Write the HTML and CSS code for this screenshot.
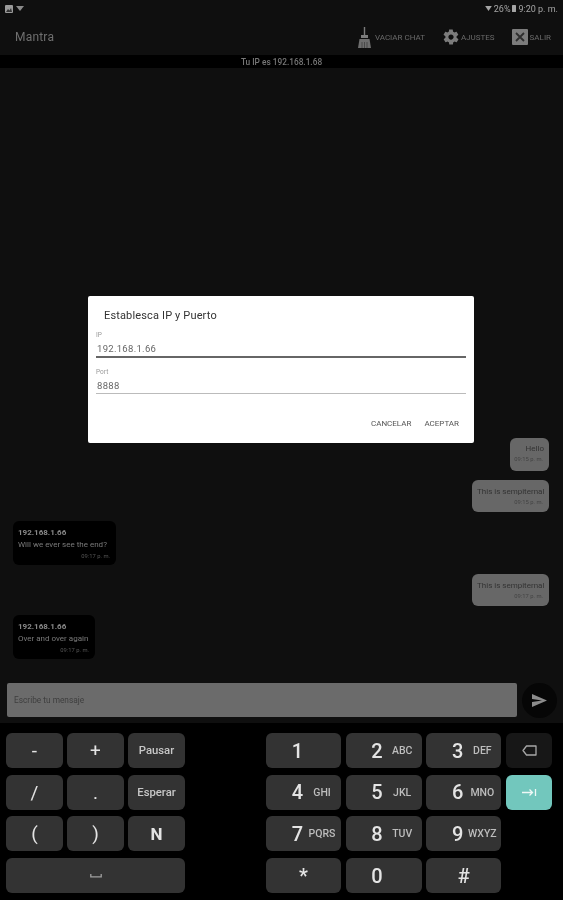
FILE: index.html
```html
<!DOCTYPE html>
<html lang="en">
<head>
  <meta charset="UTF-8">
  <meta name="viewport" content="width=device-width, initial-scale=1.0">
  <title>Mantra</title>
  <link rel="stylesheet" href="styles.css">
</head>
<body>
  <div class="app">
    <div class="status-bar">
      <div class="status-left">
        <svg width="8" height="8" viewBox="0 0 8 8"><rect width="8" height="8" rx="1" fill="#9a9a9a"/><path d="M1 7l2-3 1.500 1.500L6 3l1 4z" fill="#333"/></svg>
        <svg width="8" height="5" viewBox="0 0 8 5"><path d="M0 0h8L4 5z" fill="#8a8a8a"/></svg>
      </div>
      <div class="status-right">
        <svg width="7" height="5" viewBox="0 0 8 6"><path d="M0 0h8L4 6z" fill="#a5a5a5"/></svg>
        <span>26%</span>
        <svg width="4" height="7" viewBox="0 0 4 7"><rect width="4" height="7" rx="0.500" fill="#a5a5a5"/></svg>
        <span>9:20 p. m.</span>
      </div>
    </div>

    <header class="app-bar">
      <div class="app-title">Mantra</div>
      <div class="actions">
        <div class="action action-clear">
          <svg width="15" height="21" viewBox="0 0 15 21"><path d="M6.800 0h1.400v8H6.800z" fill="#7c7c7c"/><path d="M4 8h7v3H4z" fill="#7c7c7c"/><path d="M2.500 12h10l1.500 9H1z" fill="#6e6e6e"/><path d="M5 15v6M7.500 15v6M10 15v6" stroke="#3a3a3a" stroke-width="0.700"/></svg>
          <span>VACIAR CHAT</span>
        </div>
        <div class="action action-settings">
          <svg width="18" height="18" viewBox="0 0 24 24"><path fill="#7c7c7c" d="M19.400 13c.1-.3.1-.7.1-1s0-.7-.1-1l2.100-1.600c.2-.2.2-.4.100-.6l-2-3.500c-.1-.2-.4-.3-.6-.2l-2.500 1c-.5-.4-1.100-.7-1.700-1l-.4-2.600c0-.3-.2-.4-.5-.4h-4c-.3 0-.5.100-.5.400l-.4 2.600c-.6.300-1.200.6-1.700 1l-2.500-1c-.2-.1-.5 0-.6.200l-2 3.500c-.1.200-.1.400.1.600L4.600 11c-.1.300-.1.700-.1 1s0 .7.100 1l-2.100 1.600c-.2.200-.2.400-.1.600l2 3.500c.1.200.4.300.6.200l2.500-1c.5.400 1.100.7 1.700 1l.4 2.600c0 .3.200.4.500.4h4c.3 0 .5-.1.500-.4l.4-2.600c.6-.3 1.200-.6 1.700-1l2.500 1c.2.100.5 0 .6-.2l2-3.500c.1-.2.100-.4-.1-.6zM12 15.500c-1.900 0-3.500-1.600-3.500-3.500s1.600-3.500 3.500-3.500 3.500 1.600 3.500 3.500-1.600 3.500-3.500 3.500z"/></svg>
          <span>AJUSTES</span>
        </div>
        <div class="action action-exit">
          <svg width="16" height="16" viewBox="0 0 16 16"><rect width="16" height="16" rx="1" fill="#7c7c7c"/><path d="M4 4l8 8M12 4l-8 8" stroke="#2e2e2e" stroke-width="1.800"/></svg>
          <span>SALIR</span>
        </div>
      </div>
    </header>

    <div class="ip-bar">Tu IP es 192.168.1.68</div>

    <main class="chat">
      <div class="bubble bubble-me bubble-short">
        <div class="bubble-text">Hello</div>
        <div class="bubble-time">09:15 p. m.</div>
      </div>
      <div class="bubble bubble-me">
        <div class="bubble-text">This is sempiternal</div>
        <div class="bubble-time">09:15 p. m.</div>
      </div>
      <div class="bubble bubble-them bubble-wide">
        <div class="bubble-from">192.168.1.66</div>
        <div class="bubble-text">Will we ever see the end?</div>
        <div class="bubble-time">09:17 p. m.</div>
      </div>
      <div class="bubble bubble-me">
        <div class="bubble-text">This is sempiternal</div>
        <div class="bubble-time">09:17 p. m.</div>
      </div>
      <div class="bubble bubble-them bubble-narrow">
        <div class="bubble-from">192.168.1.66</div>
        <div class="bubble-text">Over and over again</div>
        <div class="bubble-time">09:17 p. m.</div>
      </div>
    </main>

    <div class="composer">
      <div class="composer-input">Escribe tu mensaje</div>
      <div class="send-btn">
        <svg width="15" height="13" viewBox="0 0 15 13"><path d="M0 0l15 6.500L0 13V8l10-1.500L0 5z" fill="#8c8c8c"/></svg>
      </div>
    </div>

    <div class="keyboard">
      <div class="keys-left">
        <div class="key key-symbol">-</div>
        <div class="key key-symbol">+</div>
        <div class="key key-word">Pausar</div>
        <div class="key key-symbol">/</div>
        <div class="key key-symbol">.</div>
        <div class="key key-word">Esperar</div>
        <div class="key key-symbol">(</div>
        <div class="key key-symbol">)</div>
        <div class="key key-symbol key-bold">N</div>
        <div class="key key-space">
          <svg width="12" height="4" viewBox="0 0 12 4"><path d="M.8 0v2.800h10.400V0" fill="none" stroke="#a0a0a0" stroke-width="1.300"/></svg>
        </div>
      </div>
      <div class="keys-right">
        <div class="key key-digit"><b>1</b><span></span></div>
        <div class="key key-digit"><b>2</b><span>ABC</span></div>
        <div class="key key-digit"><b>3</b><span>DEF</span></div>
        <div class="key key-back">
          <svg width="15" height="11" viewBox="0 0 15 11"><path d="M4.500 1H14v9H4.500L1 5.500z" fill="none" stroke="#a8a8a8" stroke-width="1.300" stroke-linejoin="round"/></svg>
        </div>
        <div class="key key-digit"><b>4</b><span>GHI</span></div>
        <div class="key key-digit"><b>5</b><span>JKL</span></div>
        <div class="key key-digit"><b>6</b><span>MNO</span></div>
        <div class="key key-tab">
          <svg width="15" height="9" viewBox="0 0 15 9"><path d="M0 4.500h10M7.500 1.500l3 3-3 3M13.500 1v7" fill="none" stroke="#eef8f6" stroke-width="1.300"/></svg>
        </div>
        <div class="key key-digit"><b>7</b><span>PQRS</span></div>
        <div class="key key-digit"><b>8</b><span>TUV</span></div>
        <div class="key key-digit"><b>9</b><span>WXYZ</span></div>
        <div class="key-empty"></div>
        <div class="key key-digit key-center"><b>*</b></div>
        <div class="key key-digit"><b>0</b><span></span></div>
        <div class="key key-digit key-center"><b>#</b></div>
        <div class="key-empty"></div>
      </div>
    </div>

    <div class="dialog">
      <div class="dialog-title">Establesca IP y Puerto</div>
      <div class="field field-active">
        <label>IP</label>
        <div class="field-value">192.168.1.66</div>
      </div>
      <div class="field">
        <label>Port</label>
        <div class="field-value">8888</div>
      </div>
      <div class="dialog-buttons">
        <span>CANCELAR</span>
        <span>ACEPTAR</span>
      </div>
    </div>
  </div>
</body>
</html>
```

FILE: styles.css
```css
body {
  margin: 0;
  padding: 0;
  background-color: #0f0f0f;
  font-family: Roboto, 'Liberation Sans', sans-serif;
}

/* reference is a soft, upscaled capture */
.app {
  position: relative;
  width: 563px;
  height: 900px;
  display: flex;
  flex-direction: column;
  overflow: hidden;
  background-color: #0f0f0f;
  filter: blur(0.4px);
}

.status-bar {
  height: 17px;
  padding: 0 5px;
  display: flex;
  justify-content: space-between;
  align-items: center;
  color: #a5a5a5;
  font-size: 9px;
}

.status-left,
.status-right {
  display: flex;
  align-items: center;
  gap: 3px;
}

.status-right {
  gap: 2px;
}

.app-bar {
  height: 38px;
  box-sizing: border-box;
  padding: 2px 12px 0 15px;
  display: flex;
  justify-content: space-between;
  align-items: center;
}

.app-title {
  color: #6f6f6f;
  font-size: 12px;
  letter-spacing: 0.2px;
}

.actions {
  display: flex;
  align-items: center;
}

.action {
  display: flex;
  align-items: center;
  gap: 2px;
  color: #6a6a6a;
  font-size: 8px;
}

.action-clear {
  gap: 3px;
  margin-right: 17px;
}

.action-settings {
  gap: 1px;
  margin-right: 17px;
}

.ip-bar {
  height: 13px;
  line-height: 14px;
  background-color: #000;
  color: #777;
  font-size: 8.300px;
  font-weight: 500;
  text-align: center;
}

.chat {
  flex: 1;
  padding: 0 14px 24px 13px;
  display: flex;
  flex-direction: column;
  justify-content: flex-end;
  gap: 9px;
}

.bubble {
  box-sizing: border-box;
  height: 32px;
  width: 77px;
  padding: 7px 6px 0 5px;
  border-radius: 6px;
  font-size: 8px;
}

.bubble-me {
  align-self: flex-end;
  background-color: #676767;
  color: #333;
  text-align: right;
}

.bubble-short {
  width: 39px;
  height: 33px;
  padding: 6px 6px 0 2px;
}

.bubble-them {
  align-self: flex-start;
  height: 44px;
  background-color: #000;
  color: #7a7a7a;
}

.bubble-wide {
  width: 103px;
}

.bubble-narrow {
  width: 82px;
}

.bubble-text {
  line-height: 10px;
  white-space: nowrap;
}

.bubble-me .bubble-text {
  margin-right: -1px;
}

.bubble-time {
  margin-top: 2px;
  font-size: 5.800px;
  line-height: 7px;
  text-align: right;
  white-space: nowrap;
  opacity: 0.7;
}

.bubble-them .bubble-time {
  margin-top: 3px;
}

.bubble-from {
  margin-bottom: 3px;
  font-size: 8px;
  font-weight: 700;
  line-height: 9px;
  color: #8a8a8a;
}

.composer {
  height: 40px;
  box-sizing: border-box;
  padding: 0 6px 6px 7px;
  display: flex;
  align-items: center;
  gap: 5px;
}

.composer-input {
  flex: 1;
  height: 34px;
  line-height: 34px;
  padding-left: 7px;
  border-radius: 2px;
  background-color: #6b6b6b;
  color: #3e3e3e;
  font-size: 8.300px;
}

.send-btn {
  flex: none;
  width: 35px;
  height: 35px;
  border-radius: 50%;
  background-color: #060606;
  display: flex;
  justify-content: center;
  align-items: center;
}

.keyboard {
  flex: none;
  height: 177px;
  box-sizing: border-box;
  padding: 10px 11px 0 6px;
  display: flex;
  justify-content: space-between;
  background-color: #000;
}

.keys-left,
.keys-right {
  display: grid;
  grid-template-rows: repeat(4, 35px);
  row-gap: 6.700px;
}

.keys-left {
  grid-template-columns: repeat(3, 57px);
  column-gap: 4px;
}

.keys-right {
  grid-template-columns: 75px 76px 75px 46px;
  column-gap: 4.670px;
}

.key {
  display: flex;
  justify-content: center;
  align-items: center;
  border-radius: 6px;
  background-color: #333;
  color: #e4e4e4;
}

.key-symbol {
  font-size: 19px;
}

.key-bold {
  font-size: 17px;
  font-weight: 700;
}

.key-word {
  font-size: 11.300px;
  font-weight: 500;
  color: #c8c8c8;
}

.key-space {
  grid-column: span 3;
}

.key-digit {
  display: grid;
  grid-template-columns: 37px 1fr;
  align-items: center;
}

.key-digit b {
  font-size: 20px;
  font-weight: 500;
  text-align: right;
}

.key-digit span {
  font-size: 10.500px;
  font-weight: 500;
  color: #bdbdbd;
  text-align: center;
  white-space: nowrap;
}

.key-center {
  display: flex;
}

.key-back {
  background-color: #171717;
}

.key-tab {
  background-color: #72c7bd;
}

/* dialog sits over the chat */
.dialog {
  position: absolute;
  left: 88px;
  top: 296px;
  width: 386px;
  height: 147px;
  box-sizing: border-box;
  padding: 13px 8px 0;
  border-radius: 2px;
  background-color: #fff;
}

.dialog-title {
  margin: 0 0 8px 8px;
  color: #333;
  font-size: 11px;
  line-height: 14px;
  letter-spacing: 0.15px;
}

.field {
  margin-bottom: 10px;
}

.field label {
  display: block;
  color: #9a9a9a;
  font-size: 6.500px;
  line-height: 8px;
}

.field-value {
  height: 14px;
  line-height: 14px;
  margin-top: 3px;
  padding-left: 1px;
  border-bottom: 1px solid #bbb;
  color: #666;
  font-size: 9.500px;
  letter-spacing: 0.3px;
}

.field-active .field-value {
  border-bottom: 2px solid #666;
}

.dialog-buttons {
  margin-top: 25px;
  padding-right: 7px;
  display: flex;
  justify-content: flex-end;
  gap: 13px;
  color: #555;
  font-size: 8px;
}
```
